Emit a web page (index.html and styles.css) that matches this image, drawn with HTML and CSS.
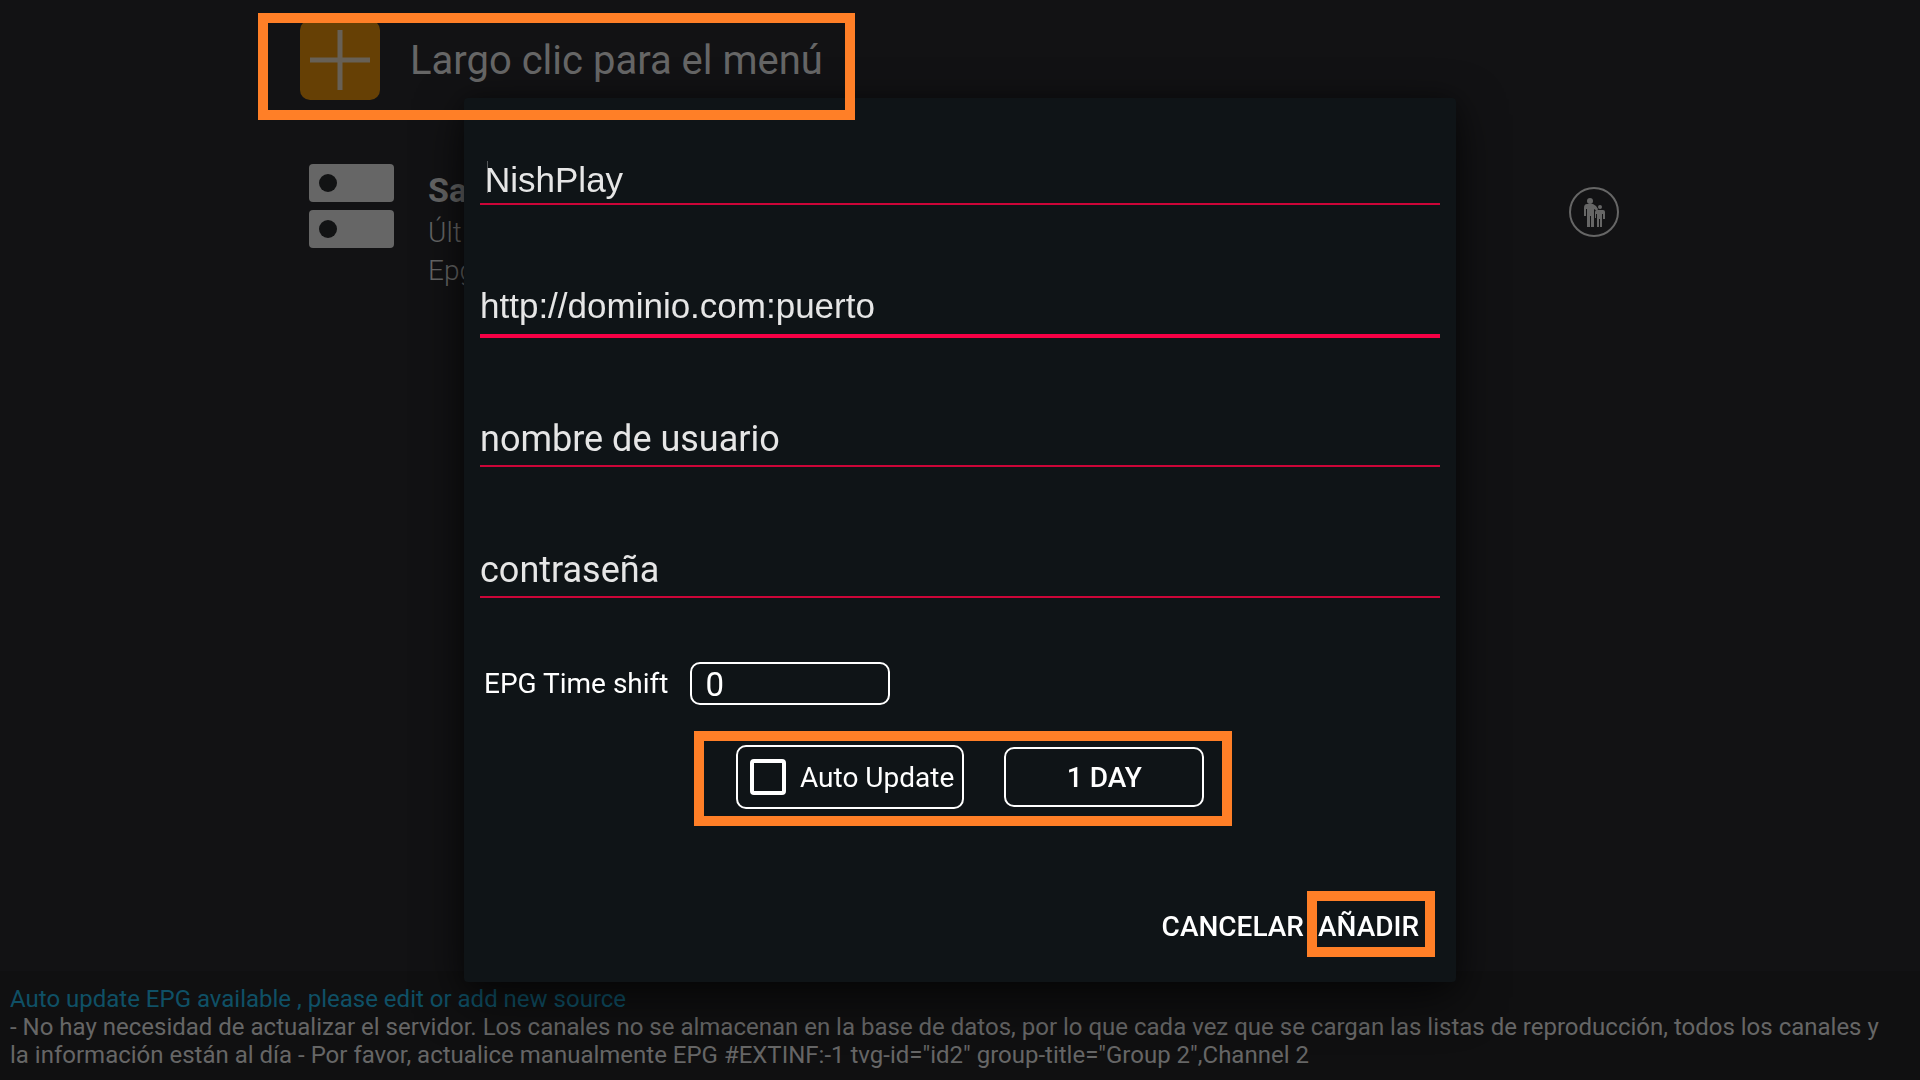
FILE: index.html
```html
<!DOCTYPE html>
<html lang="es">
  <head>
    <meta charset="UTF-8" />
    <meta name="viewport" content="width=device-width, initial-scale=1.0" />
    <title>NishPlay</title>
    <link rel="stylesheet" href="styles.css">
  </head>
  <body>
    <main class="page">
      <header class="add-row">
        <svg class="add-icon" viewBox="0 0 80 80" aria-hidden="true">
          <rect width="80" height="80" rx="10" fill="#664005" />
          <path d="M10 40H70M40 10V70" stroke="#676056" stroke-width="5" />
        </svg>
        <h1>Largo clic para el menú</h1>
      </header>

      <section class="source">
        <svg class="server-icon" viewBox="0 0 85 84" aria-hidden="true">
          <rect width="85" height="38" rx="4" fill="#666" />
          <rect y="46" width="85" height="38" rx="4" fill="#666" />
          <circle cx="19" cy="19" r="9" fill="#121314" />
          <circle cx="19" cy="65" r="9" fill="#121314" />
        </svg>
        <div class="source-text">
          <h2>Sa</h2>
          <p>Últ</p>
          <p>Epg</p>
        </div>
        <svg class="parental-icon" viewBox="0 0 50 50" role="img" aria-label="Control parental">
          <circle cx="25" cy="25" r="24" fill="none" stroke="#666" stroke-width="2" />
          <g fill="#666">
            <circle cx="21" cy="14" r="3" />
            <path d="M18 17h6l3 2 2 3-1 2-3-2v18h-3V29h-1v11h-3V22h-1v7h-2v-8q0-4 3-4z" />
            <circle cx="31" cy="20" r="2" />
            <path d="M28 23h6q2 0 2 2v7h-2v-5h-1v13h-2v-8h-1v8h-2V27h-1v4h-1v-6q0-2 2-2z" />
          </g>
        </svg>
      </section>

      <footer class="notice">
        <p class="notice-title">Auto update EPG available , please edit or add new source</p>
        <p>- No hay necesidad de actualizar el servidor. Los canales no se almacenan en la base de datos, por lo que cada vez que se cargan las listas de reproducción, todos los canales y la información están al día - Por favor, actualice manualmente EPG #EXTINF:-1 tvg-id="id2" group-title="Group 2",Channel 2</p>
      </footer>
    </main>

    <div class="overlay">
      <form class="dialog" role="dialog" aria-label="Añadir">
        <div class="field">
          <input class="name" type="text" value="NishPlay" aria-label="Nombre" />
        </div>
        <div class="field field-active">
          <input class="url" type="text" value="http://dominio.com:puerto" aria-label="URL" />
        </div>
        <div class="field">
          <input type="text" placeholder="nombre de usuario" aria-label="nombre de usuario" />
        </div>
        <div class="field">
          <input type="password" placeholder="contraseña" aria-label="contraseña" />
        </div>

        <div class="time-shift">
          <label for="shift">EPG Time shift</label>
          <input type="text" id="shift" value="0" />
        </div>

        <div class="update">
          <label class="auto-update" for="auto">
            <input type="checkbox" id="auto" />
            Auto Update
          </label>
          <button type="button" class="interval">1 DAY</button>
        </div>

        <div class="actions">
          <button type="button">CANCELAR</button>
          <button type="button" class="add">AÑADIR</button>
        </div>
      </form>
    </div>
  </body>
</html>
```
FILE: styles.css
```css
* {
  box-sizing: border-box;
}
body {
  margin: 0;
  background: #121214;
  color: #666;
  font-family: Roboto, sans-serif;
}
h1,
h2,
p {
  margin: 0;
}
.page {
  display: flex;
  flex-direction: column;
  min-height: 100vh;
}

/* background list */
.add-row {
  position: relative;
  display: flex;
  align-items: center;
  gap: 30px;
  width: fit-content;
  margin: 13px 0 0 258px;
  padding: 7px 32px 20px 42px;
}
/* the frame stays above the dialog */
.add-row::after {
  content: "";
  position: absolute;
  inset: 0;
  z-index: 2;
  border: 10px solid #ff7f27;
}
.add-icon {
  width: 80px;
  height: 80px;
}
h1 {
  font-size: 40px;
  font-weight: 400;
}
.source {
  display: flex;
  align-items: flex-start;
  padding: 44px 301px 0 309px;
}
.server-icon {
  width: 85px;
  height: 84px;
}
.source-text {
  flex: 1;
  padding: 7px 0 0 34px;
  font-size: 28px;
  font-weight: 300;
  line-height: 38px;
}
h2 {
  margin-bottom: 5px;
  font-size: 34px;
  font-weight: 700;
  line-height: 38px;
}
.parental-icon {
  width: 50px;
  height: 50px;
  margin-top: 23px;
}
.notice {
  margin-top: auto;
  padding: 14px 24px 11px 10px;
  background: #101011;
  font-size: 24px;
  line-height: 28px;
}
.notice-title {
  color: #0f5066;
}

/* dialog */
.overlay {
  position: fixed;
  inset: 0;
  z-index: 1;
  display: flex;
  align-items: center;
  justify-content: center;
}
.dialog {
  width: 992px;
  max-width: 100%;
  padding: 0 16px 25px;
  border-radius: 4px;
  background: #0f1417;
  box-shadow: 0 16px 48px rgba(0, 0, 0, 0.6), 0 0 24px rgba(0, 0, 0, 0.3);
  color: #fff;
}
input,
button {
  margin: 0;
  border: 0;
  background: none;
  color: inherit;
  font-family: inherit;
}
.field {
  display: flex;
  align-items: flex-end;
  height: 131px;
}
.field:first-child {
  height: 107px;
}
/* thicker underline hangs below the row */
.field-active {
  height: 133px;
  margin-bottom: -2px;
}
.field input {
  width: 100%;
  height: 52px;
  padding: 0 0 2px;
  border-bottom: 2px solid #cc0538;
  color: #e6e6e6;
  font-size: 36px;
}
.field input::placeholder {
  color: #e6e6e6;
  opacity: 1;
}
.field .name,
.field .url {
  font-family: "Liberation Sans", Arial, sans-serif;
  font-size: 35px;
}
.field .name {
  padding: 4px 0 0 5px;
  /* text cursor */
  background: linear-gradient(#55585a, #55585a) 7px 8px / 1px 32px no-repeat;
}
.field .url {
  padding-bottom: 8px;
  border-bottom: 4px solid #f50045;
}
.time-shift {
  display: flex;
  align-items: center;
  gap: 21px;
  padding: 64px 0 26px 4px;
  font-size: 28px;
}
.time-shift input {
  width: 200px;
  height: 43px;
  padding: 2px 14px 0;
  border: 2px solid #fff;
  border-radius: 10px;
  font-size: 33px;
}
.update {
  display: flex;
  align-items: center;
  gap: 40px;
  width: fit-content;
  margin-left: 214px;
  padding: 4px 18px 7px 32px;
  border: 10px solid #ff7f27;
  font-size: 28px;
}
.auto-update {
  display: flex;
  align-items: center;
  gap: 14px;
  height: 64px;
  padding: 0 8px 0 12px;
  border: 2px solid #fff;
  border-radius: 10px;
}
.auto-update input {
  appearance: none;
  width: 36px;
  height: 36px;
  border: 4px solid #fff;
  border-radius: 4px;
}
.interval {
  width: 200px;
  height: 60px;
  border: 2px solid #fff;
  border-radius: 10px;
  font-size: 28px;
  font-weight: 500;
}
.actions {
  display: flex;
  align-items: center;
  justify-content: flex-end;
  gap: 3px;
  padding: 65px 5px 0 0;
}
.actions button {
  padding: 4px 0 0;
  font-size: 28px;
  font-weight: 500;
}
.actions .add {
  width: 128px;
  height: 66px;
  padding-right: 5px;
  border: 10px solid #ff7f27;
}
```
